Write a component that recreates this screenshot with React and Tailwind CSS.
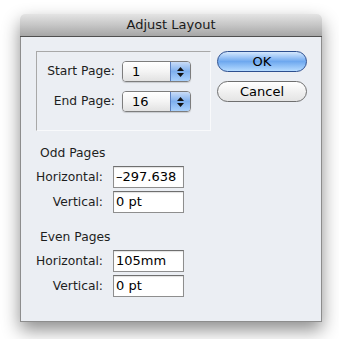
import React from 'react';

const font = { fontFamily: '"DejaVu Sans", "Lucida Grande", sans-serif' };

const Popup = ({ value }) => (
  <div className='flex h-[21px] w-[69px] rounded-[4px] border border-[#7d7d7d] overflow-hidden shadow-[0_1px_1px_rgba(0,0,0,0.15)]'>
    <div className='flex-1 flex items-center pl-[9px] text-[13px] text-black bg-gradient-to-b from-white via-[#f4f4f4] to-[#e2e2e2]'>
      {value}
    </div>
    <div className='w-[20px] flex flex-col items-center justify-center gap-[2px] border-l border-[#5a7fbf] bg-gradient-to-b from-[#c9dcf7] via-[#7fb0ee] to-[#a9d0fb]'>
      <svg width='7' height='4' viewBox='0 0 7 4'><path d='M3.5 0L7 4H0z' fill='#111' /></svg>
      <svg width='7' height='4' viewBox='0 0 7 4'><path d='M0 0h7L3.5 4z' fill='#111' /></svg>
    </div>
  </div>
);

const Field = ({ label, value }) => (
  <div className='flex items-center'>
    <div className='w-[82px] text-right text-[12.3px] text-[#1e1e1e]'>{label}</div>
    <div className='ml-[10px] h-[22px] w-[71px] border border-[#8e8e8e] border-t-[#6f6f6f] bg-white pl-[2px] text-[13px] leading-[20px] text-black shadow-[inset_0_1px_1px_rgba(0,0,0,0.12)]'>
      {value}
    </div>
  </div>
);

const App = () => {
  return (
    <div className='w-[339px] h-[339px] bg-white overflow-hidden' style={font}>
      <div className='ml-[20px] mt-[14px] w-[302px] h-[308px] flex flex-col rounded-t-[5px] shadow-[0_8px_18px_rgba(0,0,0,0.45)]'>
        <div className='h-[23px] flex items-center justify-center rounded-t-[5px] border-b border-[#4f4f4f] bg-gradient-to-b from-[#e4e4e4] via-[#c6c6c6] to-[#a6a6a6] text-[13px] text-[#1a1a1a]'>
          Adjust Layout
        </div>
        <div className='flex-1 bg-[#ebeef3] border-x border-b border-[#8d8d8d] pt-[14px]'>
          <div className='flex pl-[15px]'>
            <div className='w-[175px] h-[80px] border border-[#a8a8a8] border-b-[#f8f9fb] border-r-[#f8f9fb] pt-[9px] flex flex-col gap-[9px]'>
              <div className='flex items-center'>
                <div className='w-[78px] text-right text-[12.3px] text-[#1e1e1e]'>Start Page:</div>
                <div className='ml-[7px]'><Popup value='1' /></div>
              </div>
              <div className='flex items-center'>
                <div className='w-[78px] text-right text-[12.3px] text-[#1e1e1e]'>End Page:</div>
                <div className='ml-[7px]'><Popup value='16' /></div>
              </div>
            </div>
            <div className='ml-[6px] flex flex-col gap-[9px]'>
              <button className='h-[21px] w-[90px] rounded-full border border-[#2d4f8f] bg-gradient-to-b from-[#d5e8fd] via-[#6ea8ef] to-[#b5dbff] text-[13px] leading-none text-black'>
                OK
              </button>
              <button className='h-[21px] w-[90px] rounded-full border border-[#6f6f6f] bg-gradient-to-b from-white via-[#f1f1f1] to-[#e4e4e4] text-[13px] leading-none text-black'>
                Cancel
              </button>
            </div>
          </div>

          <div className='mt-[14px] pl-[19px] h-[16px] text-[12.3px] leading-[16px] text-[#1e1e1e]'>Odd Pages</div>
          <div className='mt-[5px] flex flex-col gap-[3px]'>
            <Field label='Horizontal:' value='–297.638' />
            <Field label='Vertical:' value='0 pt' />
          </div>

          <div className='mt-[16px] pl-[19px] h-[16px] text-[12.3px] leading-[16px] text-[#1e1e1e]'>Even Pages</div>
          <div className='mt-[5px] flex flex-col gap-[3px]'>
            <Field label='Horizontal:' value='105mm' />
            <Field label='Vertical:' value='0 pt' />
          </div>
        </div>
      </div>
    </div>
  );
};

export default App;
